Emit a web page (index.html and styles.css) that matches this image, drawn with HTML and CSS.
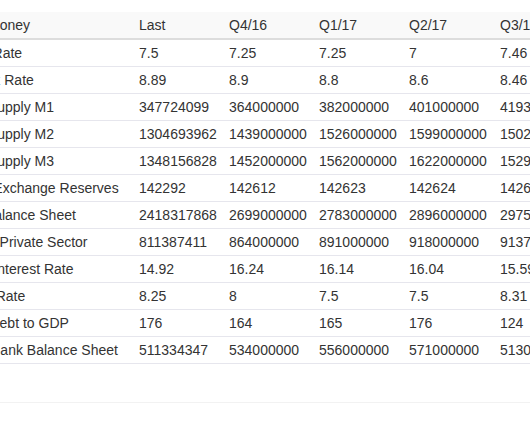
FILE: index.html
```html
<!DOCTYPE html>
<html>
<head>
<meta charset="utf-8">
<link rel="stylesheet" href="styles.css">
</head>
<body>
<div class="page">
  <div class="table-wrap">
    <table class="data">
      <colgroup>
        <col class="c-label">
        <col class="c-num">
        <col class="c-num">
        <col class="c-num">
        <col class="c-wide">
        <col class="c-num">
        <col class="c-num">
      </colgroup>
      <thead>
        <tr><th class="head-label">Money</th><th>Last</th><th>Q4/16</th><th>Q1/17</th><th>Q2/17</th><th>Q3/17</th><th>Q4/17</th></tr>
      </thead>
      <tbody>
        <tr><td>Interest Rate</td><td>7.5</td><td>7.25</td><td>7.25</td><td>7</td><td>7.46</td><td>7.5</td></tr>
        <tr><td>Interbank Rate</td><td>8.89</td><td>8.9</td><td>8.8</td><td>8.6</td><td>8.46</td><td>8.5</td></tr>
        <tr><td>Money Supply M1</td><td>347724099</td><td>364000000</td><td>382000000</td><td>401000000</td><td>419300000</td><td>438000000</td></tr>
        <tr><td>Money Supply M2</td><td>1304693962</td><td>1439000000</td><td>1526000000</td><td>1599000000</td><td>1502000000</td><td>1540000000</td></tr>
        <tr><td>Money Supply M3</td><td>1348156828</td><td>1452000000</td><td>1562000000</td><td>1622000000</td><td>1529000000</td><td>1570000000</td></tr>
        <tr><td>Foreign Exchange Reserves</td><td>142292</td><td>142612</td><td>142623</td><td>142624</td><td>142630</td><td>142640</td></tr>
        <tr><td>Banks Balance Sheet</td><td>2418317868</td><td>2699000000</td><td>2783000000</td><td>2896000000</td><td>2975000000</td><td>3050000000</td></tr>
        <tr><td>Loans to Private Sector</td><td>811387411</td><td>864000000</td><td>891000000</td><td>918000000</td><td>913700000</td><td>930000000</td></tr>
        <tr><td>Deposit Interest Rate</td><td>14.92</td><td>16.24</td><td>16.14</td><td>16.04</td><td>15.59</td><td>15.2</td></tr>
        <tr><td>Lending Rate</td><td>8.25</td><td>8</td><td>7.5</td><td>7.5</td><td>8.31</td><td>8.2</td></tr>
        <tr><td>Private Debt to GDP</td><td>176</td><td>164</td><td>165</td><td>176</td><td>124</td><td>130</td></tr>
        <tr><td>Central Bank Balance Sheet</td><td>511334347</td><td>534000000</td><td>556000000</td><td>571000000</td><td>513000000</td><td>520000000</td></tr>
      </tbody>
    </table>
  </div>
  <div class="footer-rule"></div>
</div>
</body>
</html>
```

FILE: styles.css
```css
html, body {
  margin: 0;
  padding: 0;
  background: #ffffff;
}

body {
  font-family: "Liberation Sans", Arial, sans-serif;
  font-size: 14px;
  color: #333333;
}

.page {
  padding-top: 12px;
  overflow: hidden;
  width: 530px;
}

.table-wrap {
  margin-left: -64px;
}

.data {
  border-collapse: collapse;
  table-layout: fixed;
  width: 738px;
}

.c-label { width: 197px; }
.c-num { width: 90px; }
.c-wide { width: 91px; }

.data th,
.data td {
  padding: 3px 6px;
  line-height: 20px;
  text-align: left;
  white-space: nowrap;
  overflow: hidden;
}

.data th {
  font-weight: normal;
  background: #f9f9f9;
  border-bottom: 2px solid #dddddd;
}

.data th.head-label {
  padding-left: 52px;
}

.data td {
  border-bottom: 1px solid #e6e6ed;
}

.footer-rule {
  margin-top: 38px;
  border-top: 1px solid #f2f2f2;
  height: 20px;
}
```
